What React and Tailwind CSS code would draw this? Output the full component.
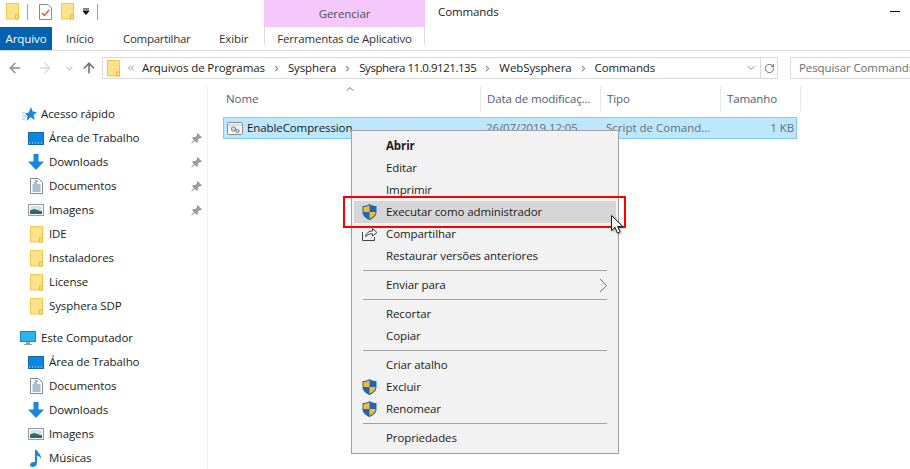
import { ArrowLeft, ArrowRight, ArrowUp, ChevronDown, ChevronRight, ChevronUp, ChevronsLeft, RotateCw } from "lucide-react";

const FONT = "font-['Open_Sans','Noto_Sans',sans-serif]";

function Folder({ className = "" }) {
  return (
    <svg width="13" height="17" viewBox="0 0 13 17" className={`shrink-0 ${className}`}>
      <path d="M.5.5h12v15.500H.5z" fill="#fde28e" stroke="#f5c842" />
      <path d="M9.500 16v-4h3v4z" fill="#fde28e" stroke="#eeb52f" />
    </svg>
  );
}

function Desktop() {
  return (
    <svg width="16" height="13" viewBox="0 0 16 13">
      <rect x="0.5" y="0.5" width="15" height="12" fill="#0b87e0" stroke="#1666b0" />
      <path d="M1 11h14" stroke="#cfe9fb" strokeDasharray="1 2" />
    </svg>
  );
}

function Download() {
  return (
    <svg width="16" height="16" viewBox="0 0 16 16">
      <path d="M5.500 0h5v7.500H16L8 16 0 7.500h5.500z" fill="#1c86dc" />
    </svg>
  );
}

function Doc() {
  return (
    <svg width="13" height="16" viewBox="0 0 13 16">
      <path d="M.5.5H8.500L12.500 4.500v11H.5z" fill="#fff" stroke="#8a8a8a" />
      <path d="M2.500 7h8M2.500 9h8M2.500 11h8M2.500 13h8M5 3h3M4 5h3" stroke="#4a7fa8" />
    </svg>
  );
}

function Picture() {
  return (
    <svg width="16" height="12" viewBox="0 0 16 12">
      <rect x="0.5" y="0.5" width="15" height="11" fill="#fff" stroke="#9a9a9a" />
      <rect x="2" y="2" width="12" height="8" fill="#cfe3ec" />
      <path d="M2 6.500l4-1.500 8 2.500V10H2z" fill="#2f6b5f" />
    </svg>
  );
}

function Music() {
  return (
    <svg width="12" height="17" viewBox="0 0 12 17">
      <path d="M5 0h2c.5 3 4.500 4 4 9-.8-2-2-3-4-3.500V13c0 2.500-2 4-4.500 4C.8 17 0 16 0 14.800 0 13 2.500 11.500 5 12z" fill="#1c86dc" />
    </svg>
  );
}

function Star() {
  return (
    <svg width="15" height="15" viewBox="0 0 15 15" className="shrink-0">
      <path d="M9 0l1.700 4.600L15 5l-3.400 3 1.200 5-4.300-2.700L4.500 14l1-5L3 6.500l3.800-1z" fill="#1c86dc" />
      <path d="M0 6h3M0 9h4M0 12h3" stroke="#8cc4ee" />
    </svg>
  );
}

function Monitor() {
  return (
    <svg width="16" height="15" viewBox="0 0 16 15" className="shrink-0">
      <rect x="0.500" y="0.500" width="15" height="10" fill="#2bb5ee" stroke="#1b87c9" />
      <path d="M6.500 11h3v2h-3zM4 13.500h8" fill="#9a9a9a" stroke="#9a9a9a" />
    </svg>
  );
}

function Pin() {
  return (
    <svg width="11" height="11" viewBox="0 0 11 11" fill="#9a9a9a" className="shrink-0">
      <path d="M6.500 0L11 4.500 9.800 5.300 8.800 5l-2 2 .2 2-1 1-2-2L.8 10.500 0 10.200 3 7 1 5l1-1 2 .2 2-2-.2-1z" />
    </svg>
  );
}

function Shield() {
  return (
    <svg width="15" height="16" viewBox="0 0 15 16">
      <path d="M7.500 0C5.500 1.500 3 2 .5 2v6c0 4 3.500 6.500 7 8 3.500-1.500 7-4 7-8V2c-2.500 0-5-.5-7-2z" fill="#1b66b8" />
      <path d="M7.500 1.200V8H1.500V3c2 0 4.200-.6 6-1.800zM7.500 8h6c0 3.200-3 5.400-6 6.800z" fill="#f6bc2b" />
    </svg>
  );
}

function Share() {
  return (
    <svg width="16" height="14" viewBox="0 0 16 14" fill="none" stroke="#444">
      <path d="M.5 5v8.500h12V10" />
      <path d="M3.500 9.500C4 6 7 4 10.500 4V1.500L15 5.500 10.500 9V6.800C8 6.800 5.500 7.500 3.500 9.500z" />
    </svg>
  );
}

function Cursor() {
  return (
    <svg width="13" height="20" viewBox="0 0 13 20" className="drop-shadow-[1px_1px_1px_rgba(0,0,0,0.4)]">
      <path d="M.5.5v15l3.500-3.200 2.400 5.700 2.600-1.100-2.400-5.500h5z" fill="#fff" stroke="#222" />
    </svg>
  );
}

function ScriptIcon() {
  return (
    <svg width="16" height="13" viewBox="0 0 16 13">
      <rect x="0.500" y="0.500" width="15" height="12" rx="1" fill="#f4f4f4" stroke="#8a8a8a" />
      <path d="M1 3h14" stroke="#c4c4c4" />
      <circle cx="6.500" cy="7" r="2.200" fill="#cfd8df" stroke="#7b8791" />
      <circle cx="10.500" cy="9" r="1.700" fill="#cfd8df" stroke="#7b8791" />
    </svg>
  );
}

function MenuArrow() {
  return (
    <svg width="9" height="15" viewBox="0 0 9 15" fill="none" stroke="#5f7396" className="mr-[8px]">
      <path d="M1 1l6.500 6.500L1 14" />
    </svg>
  );
}

function Crumb() {
  return <ChevronRight size={9} strokeWidth={3} className="mx-[7px] shrink-0 text-[#909090]" />;
}

const quickAccess = [
  { icon: <Desktop />, label: "Área de Trabalho", pin: true },
  { icon: <Download />, label: "Downloads", pin: true },
  { icon: <Doc />, label: "Documentos", pin: true },
  { icon: <Picture />, label: "Imagens", pin: true },
  { icon: <Folder />, label: "IDE" },
  { icon: <Folder />, label: "Instaladores" },
  { icon: <Folder />, label: "License" },
  { icon: <Folder />, label: "Sysphera SDP" },
];

const computer = [
  { icon: <Desktop />, label: "Área de Trabalho" },
  { icon: <Doc />, label: "Documentos" },
  { icon: <Download />, label: "Downloads" },
  { icon: <Picture />, label: "Imagens" },
  { icon: <Music />, label: "Músicas" },
];

const menuGroups = [
  [
    { label: "Abrir", bold: true },
    { label: "Editar" },
    { label: "Imprimir" },
    { label: "Executar como administrador", icon: <Shield />, active: true },
    { label: "Compartilhar", icon: <Share /> },
    { label: "Restaurar versões anteriores" },
  ],
  [{ label: "Enviar para", arrow: true }],
  [{ label: "Recortar" }, { label: "Copiar" }],
  [
    { label: "Criar atalho" },
    { label: "Excluir", icon: <Shield /> },
    { label: "Renomear", icon: <Shield /> },
  ],
  [{ label: "Propriedades" }],
];

function NavRow({ item }) {
  return (
    <div className="flex h-6 items-center pl-[28px] pr-[5px]">
      <span className="flex w-[16px] shrink-0 justify-center">{item.icon}</span>
      <span className="ml-[5px] flex-1 text-[#1a1a1a]">{item.label}</span>
      {item.pin && <Pin />}
    </div>
  );
}

function Sidebar() {
  return (
    <div className="h-full w-[208px] shrink-0 overflow-hidden border-r border-[#f0f0f0] pt-[16px]">
      <div className="flex h-6 items-center pl-[22px]">
        <Star />
        <span className="ml-1 text-[#1a1a1a]">Acesso rápido</span>
      </div>
      {quickAccess.map((item) => (
        <NavRow key={item.label} item={item} />
      ))}
      <div className="mt-2 flex h-6 items-center pl-5">
        <Monitor />
        <span className="ml-[5px] text-[#1a1a1a]">Este Computador</span>
      </div>
      {computer.map((item) => (
        <NavRow key={item.label} item={item} />
      ))}
    </div>
  );
}

function FileList() {
  return (
    <div className="relative flex-1 pl-[15px]">
      <ChevronUp size={12} className="absolute left-[136px] top-[-3px] text-[#707070]" />
      <div className="flex h-[25px] text-[#4c607a]">
        <div className="w-[258px] border-r border-[#e5e5e5] pl-[3px] leading-[25px]">Nome</div>
        <div className="w-[120px] border-r border-[#e5e5e5] pl-[6px] leading-[25px]">Data de modificaç...</div>
        <div className="w-[120px] border-r border-[#e5e5e5] pl-[6px] leading-[25px]">Tipo</div>
        <div className="w-[80px] border-r border-[#e5e5e5] pl-[6px] leading-[25px]">Tamanho</div>
      </div>
      <div className="mt-[6px] flex h-[22px] w-[574px] items-center border border-[#7fcbf9] bg-[#bde6ff] text-[#6d6d6d]">
        <span className="ml-[3px] flex w-[20px] shrink-0"><ScriptIcon /></span>
        <span className="w-[233px] text-[#1a1a1a]">EnableCompression</span>
        <span className="w-[120px] pl-[6px]">26/07/2019 12:05</span>
        <span className="w-[120px] pl-[6px] tracking-normal">Script de Comand...</span>
        <span className="w-[74px] text-right">1 KB</span>
      </div>
    </div>
  );
}

function ContextMenu() {
  return (
    <div className="absolute left-[351px] top-[130px] w-[268px] border border-[#a0a0a0] bg-[#f2f2f2] px-[2px] py-[4px] text-[#1a1a1a]">
      {menuGroups.map((group, i) => (
        <div key={i}>
          {i > 0 && <div className="mx-[9px] my-[3px] h-px bg-[#a0a0a0]" />}
          {group.map((item) => (
            <div
              key={item.label}
              className={`flex h-[22px] items-center ${item.active ? "bg-[#d6d6d6]" : ""}`}
            >
              <span className="flex w-[32px] shrink-0 pl-[8px]">{item.icon}</span>
              <span className={`flex-1 ${item.bold ? "font-bold" : ""}`}>{item.label}</span>
              {item.arrow && <MenuArrow />}
            </div>
          ))}
        </div>
      ))}
    </div>
  );
}

export default function App() {
  return (
    <div className={`relative flex h-[469px] w-[910px] flex-col overflow-hidden bg-white text-[11.5px] tracking-[-0.1px] ${FONT}`}>
      {/* title bar */}
      <div className="flex h-[27px] shrink-0 items-start">
        <div className="flex w-[264px] items-center pl-[6px] pt-[3px]">
          <Folder />
          <span className="ml-2 h-4 w-px bg-[#a0a0a0]" />
          <svg width="13" height="16" viewBox="0 0 13 16" className="ml-[11px]">
            <path d="M.5.5H9L12.500 4v11.500H.5z" fill="#fff" stroke="#8a8a8a" />
            <path d="M3 9l2.500 2.500L10 6" fill="none" stroke="#e2552b" strokeWidth="1.400" />
          </svg>
          <Folder className="ml-[9px]" />
          <svg width="8" height="8" viewBox="0 0 8 8" className="ml-[8px]">
            <path d="M1 1h6M1 3l3 3.500L7 3z" fill="#111" stroke="#111" />
          </svg>
          <span className="ml-[7px] h-4 w-px bg-[#a0a0a0]" />
        </div>
        <div className="flex h-[27px] w-[161px] items-center justify-center bg-[#f5c8fb] pt-[1px] text-[#505050]">Gerenciar</div>
        <div className="ml-[13px] pt-[3px] text-[#1a1a1a]">Commands</div>
        <div className="ml-auto mr-[10px] mt-[11px] h-px w-[10px] bg-[#111]" />
      </div>

      {/* ribbon tabs */}
      <div className="flex h-[24px] shrink-0 items-stretch border-b border-[#dadada] text-[#333]">
        <div className="flex w-[52px] items-center justify-center bg-[#0063b1] pt-[1px] text-white">Arquivo</div>
        <div className="flex w-[57px] items-center pl-[14px] pt-[1px]">Início</div>
        <div className="flex w-[96px] items-center pl-[14px] pt-[1px] tracking-[-0.3px]">Compartilhar</div>
        <div className="flex w-[59px] items-center pl-[14px] pt-[1px]">Exibir</div>
        <div className="flex h-[18px] w-[161px] items-center justify-center border-x border-[#dadada] pt-[6px] tracking-[-0.2px]">Ferramentas de Aplicativo</div>
      </div>

      {/* address bar */}
      <div className="flex h-[35px] shrink-0 items-center pb-[1px]">
        <div className="flex w-[102px] items-center pl-[7px] text-[#8a8a8a]">
          <ArrowLeft size={16} strokeWidth={2} />
          <ArrowRight size={16} strokeWidth={2} className="ml-[14px] text-[#d8d8d8]" />
          <ChevronDown size={11} strokeWidth={2} className="ml-[11px] text-[#a0a0a0]" />
          <ArrowUp size={16} strokeWidth={2.400} className="ml-[6px] text-[#707070]" />
        </div>
        <div className="flex h-[22px] w-[676px] items-center border border-[#d9d9d9] text-[#1a1a1a]">
          <Folder className="ml-[4px]" />
          <ChevronsLeft size={10} className="ml-[6px] text-[#808080]" />
          <span className="ml-[6px]">Arquivos de Programas</span>
          <Crumb />
          <span>Sysphera</span>
          <Crumb />
          <span className="tracking-[-0.45px]">Sysphera 11.0.9121.135</span>
          <Crumb />
          <span>WebSysphera</span>
          <Crumb />
          <span>Commands</span>
          <ChevronDown size={12} strokeWidth={1.500} className="ml-auto mr-[3px] text-[#606060]" />
          <div className="flex h-full w-[17px] items-center justify-center border-l border-[#d9d9d9]">
            <RotateCw size={11} className="text-[#606060]" />
          </div>
        </div>
        <div className="ml-[12px] flex h-[22px] flex-1 items-center overflow-hidden whitespace-nowrap border border-r-0 border-[#d9d9d9] pl-[8px] text-[#6d6d6d]">Pesquisar Commands</div>
      </div>

      {/* content */}
      <div className="flex min-h-0 flex-1">
        <Sidebar />
        <FileList />
      </div>

      <ContextMenu />

      {/* red highlight drawn over the screenshot */}
      <div className="absolute left-[343px] top-[196px] h-[32px] w-[283px] border-2 border-[#ff0000]" />
      <div className="absolute left-[611px] top-[215px]"><Cursor /></div>
    </div>
  );
}
